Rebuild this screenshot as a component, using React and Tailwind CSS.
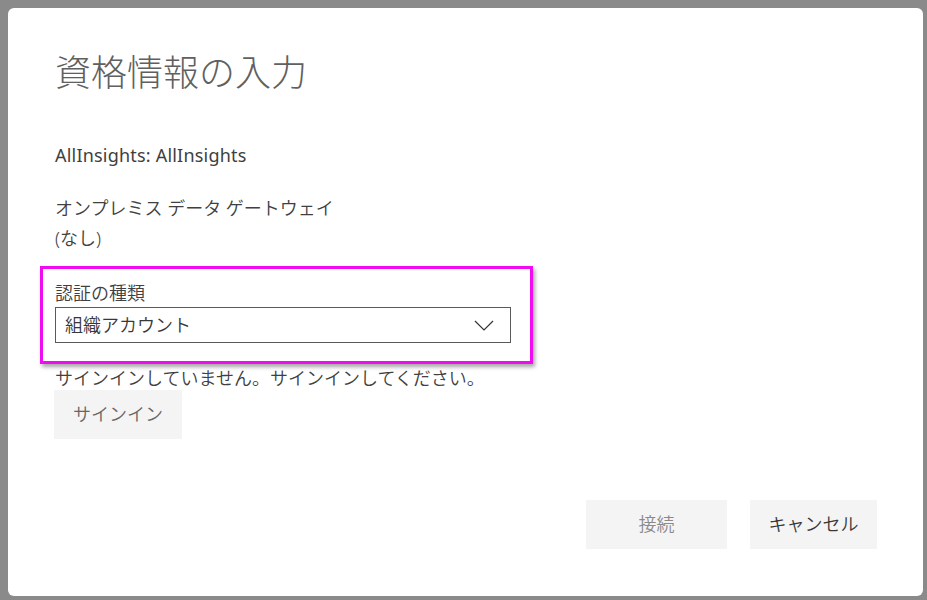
export default function App() {
  const jp = { fontFamily: '"Noto Sans", "Noto Sans CJK JP", sans-serif' };

  return (
    <main className="h-[600px] w-[927px] bg-[#8a8a8a] pt-2 pl-2 font-[350]" style={jp}>
      <div className="relative h-[588px] w-[915px] rounded-[6px] bg-white pl-[47px] pr-[46px] pt-[43px]">

        <h1 className="text-[36px] leading-[44px] font-light text-[#606060]">
          資格情報の入力
        </h1>

        <p className="mt-[45px] text-[18px] leading-[30px] font-normal tracking-[0.2px] text-[#404040]">
          AllInsights: AllInsights
        </p>

        <div className="mt-[23px] text-[18px] leading-[30px] text-[#404040]">
          <p>オンプレミス データ ゲートウェイ</p>
          <p>(なし)</p>
        </div>

        <div className="ml-[-15px] mt-[13px] w-[493px] border-[3px] border-[#f00cf0] pl-[12px] pr-[19px] pt-[12px] pb-[18px] shadow-[2px_3px_4px_rgba(0,0,0,0.35)]">
          <label className="block text-[18px] leading-[24px] text-[#404040]">
            認証の種類
          </label>
          <div className="mt-[2px] flex h-[36px] items-center justify-between border border-[#5a5a5a] pl-[9px] pr-[16px]">
            <span className="text-[18px] leading-[24px] text-[#383838]">組織アカウント</span>
            <svg width="20" height="11" viewBox="0 0 20 11" fill="none">
              <path d="M1 1 L10 10 L19 1" stroke="#333" strokeWidth="1.2" />
            </svg>
          </div>
        </div>

        <p className="mt-[2px] text-[18px] leading-[24px] text-[#404040]">
          サインインしていません。サインインしてください。
        </p>

        <button className="ml-[-1px] h-[49px] w-[128px] bg-[#f4f4f4] text-[18px] text-[#666]">
          サインイン
        </button>

        <div className="mt-[61px] flex justify-end gap-[23px]">
          <button className="h-[49px] w-[141px] bg-[#f4f4f4] text-[18px] text-[#8a8a8a]">
            接続
          </button>
          <button className="h-[49px] w-[127px] bg-[#f4f4f4] text-[18px] text-[#383838]">
            キャンセル
          </button>
        </div>

      </div>
    </main>
  );
}
